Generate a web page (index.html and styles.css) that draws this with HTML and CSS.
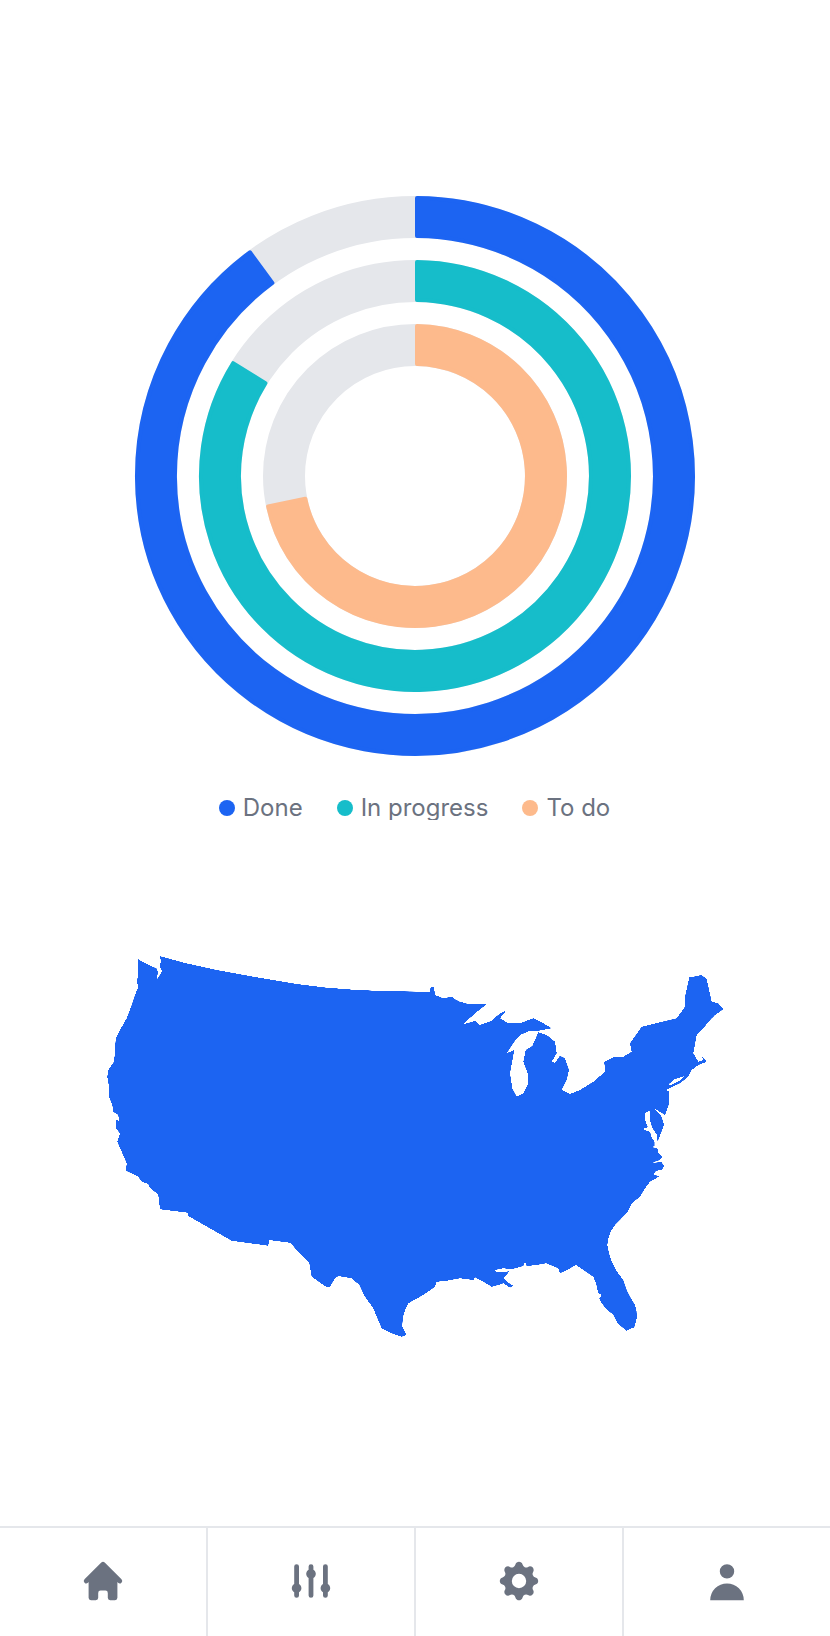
FILE: index.html
```html
<!DOCTYPE html>
<html lang="en">
<head>
<meta charset="utf-8">
<title>Dashboard</title>
<link rel="stylesheet" href="styles.css">
</head>
<body>
<div class="app">
  <main class="content">
    <section class="chart">
      <svg class="radial" viewBox="0 190 830 580" aria-hidden="true">
        <circle class="track" cx="415" cy="476" r="259"/>
        <circle class="track" cx="415" cy="476" r="195"/>
        <circle class="track" cx="415" cy="476" r="131"/>
        <path class="arc arc-done" d="M417 198A278 278 0 1 1 249.9 252.3L272.4 282.9A240 240 0 1 0 417 236Z"/>
        <path class="arc arc-progress" d="M417 262A214 214 0 1 1 233.1 363.2L265.4 383.2A176 176 0 1 0 417 300Z"/>
        <path class="arc arc-todo" d="M417 326A150 150 0 1 1 268.1 506.4L305.3 498.7A112 112 0 1 0 417 364Z"/>
      </svg>
      <ul class="legend">
        <li class="legend-item"><span class="dot dot-done"></span>Done</li>
        <li class="legend-item"><span class="dot dot-progress"></span>In progress</li>
        <li class="legend-item"><span class="dot dot-todo"></span>To do</li>
      </ul>
    </section>
    <section class="map">
      <svg class="usa" viewBox="0 930 830 420" aria-hidden="true">
        <defs>
          <filter id="smooth" x="-2%" y="-2%" width="104%" height="104%" color-interpolation-filters="sRGB">
            <feGaussianBlur stdDeviation="0.7"/>
            <feColorMatrix type="matrix" values="1 0 0 0 0  0 1 0 0 0  0 0 1 0 0  0 0 0 7 -3"/>
          </filter>
        </defs>
        <path class="usa-shape" fill-rule="evenodd" d="M137.7 959L146.7 964L156.7 968.5L158 972L156.5 980L160.5 974L162 971L159.7 966.5L161 961L159.5 956L185 963L216.7 970L255 977L296.7 984L325 987.5L356.7 990L390 991.3L430 991.7L430.7 986.7L434 987.3L435 995L443.3 998.3L451.7 996.7L455 999.3L460 1001.7L468.3 1004L486.7 1004.3L475 1013.3L463.3 1024.3L475 1021L480 1025L491.7 1020.7L500 1013.3L506 1010.7L500 1018.3L508.3 1023.3L520 1023.3L533.3 1018.3L543.3 1023.3L551.7 1028.3L538.3 1030.7L530 1030.7L520 1035L514.3 1041.7L506.7 1053.3L514.3 1050L510 1073.3L512.3 1088.3L516.7 1096.7L523.3 1093.3L527.7 1085L527.7 1073.3L523.3 1061.7L525.7 1050L532.3 1046L535 1040L538.3 1032.3L546.7 1035L555 1041.7L556.7 1053.3L551.7 1061.7L555 1062.7L560 1055.7L565 1058.3L569 1070L566.7 1080L561.7 1090L570 1094L580 1090L593.3 1081.7L605 1071.7L604.3 1061.7L613.3 1057.3L623.3 1056.7L631.7 1051.7L630 1043.3L641.7 1026.7L676.7 1018.3L685 1006.7L685 996.7L689.3 977.3L693.3 976.7L701.7 975L706.7 979.3L711.7 1001.7L718.3 1003.3L723.3 1009.3L715 1015L710 1020L703.3 1028.3L696.7 1035L693.3 1053.3L698.3 1061.7L703.3 1060L701.7 1056L706.7 1061.7L698.3 1065L691.7 1070L688.3 1076.7L680 1083.3L666 1090L669.3 1091.7L669.3 1103.3L665 1115L654 1108.3L661.7 1116.7L664 1125L658.3 1140L657.7 1142.7L657 1135L652 1127.3L650 1120L649.5 1110.5L645.5 1113L644.5 1118.3L647.8 1127.3L642.5 1129L650.2 1132L651.2 1136.7L654.5 1141.7L654.5 1146.2L650 1147.3L657.3 1147.8L658.3 1153.3L662.3 1156.7L660 1160L651.7 1162.7L661.7 1162.2L664 1166L661.7 1170L656 1170.7L653.3 1175L660 1176L650 1181.7L645 1188.3L640 1196.7L631.7 1203.3L626.7 1213.3L615 1225L611 1231L608.3 1238.3L607.3 1245L609 1253L611.7 1261.7L616.5 1271L623.3 1280L626.7 1290L630.5 1297.5L635 1305L636.5 1311L636.7 1318.3L634.3 1327.3L626 1330.7L621.7 1326.7L616.7 1321.7L613.3 1315L605.7 1308.3L601.7 1303.3L599.3 1298.3L601.7 1295L598.3 1293.3L596 1283.3L593.3 1276.7L583.3 1270L576 1265L568.3 1269.3L560 1273.3L558.3 1268.3L546 1263.3L536.7 1265L526.7 1266L525 1261.7L523.3 1266L511.7 1269.3L503.3 1268.3L495 1270L496.7 1272.3L505 1272.3L510 1270.7L503.3 1278.3L508.3 1282.7L513.3 1285.7L510 1287.7L503.3 1283.3L498.3 1285L491.7 1286.7L483.3 1281.7L475 1277.3L473.3 1280L460 1278.3L446.7 1280.7L436.7 1281.7L435 1286.7L423.3 1295L420 1296.7L408.3 1303.3L405 1310L402.7 1318.3L402.3 1326.7L406.7 1335L401.7 1336.7L391.7 1333.3L381.7 1328.3L376 1315L373.3 1308.3L365 1296.7L359.3 1285L351.7 1278.3L338.3 1276L335 1278.3L330 1286.7L326.7 1287.3L311.7 1276.7L309.3 1263.3L290 1242.7L269 1240L268.3 1245.7L231.7 1240.7L188.3 1216L188.3 1212.7L160 1209.3L158.3 1195L149.3 1186.7L148.3 1184L141.7 1181.7L138.3 1176.7L126 1170.7L126.7 1163.3L121.7 1151.7L117.3 1141.7L120 1133.3L115.7 1128.3L115.7 1120L119 1120.7L118.3 1115L113.3 1111.7L112.3 1105L109 1096.7L109.3 1088.3L107.3 1076.7L108.3 1070L114 1061.7L115 1051.7L115.7 1038.3L120 1030L126.7 1018.3L131 1007L135 995L138.3 986.7L136.7 981.7L138.3 975ZM668.3 1084.5L675 1079L685 1076L679 1081L670 1085.5Z"/>
      </svg>
    </section>
  </main>
  <nav class="tabbar">
    <a class="tab" href="#" aria-label="Home">
      <svg class="tab-icon" viewBox="0 0 20 20"><path d="M10.707 2.293a1 1 0 00-1.414 0l-7 7a1 1 0 001.414 1.414L4 10.414V17a1 1 0 001 1h2a1 1 0 001-1v-2a1 1 0 011-1h2a1 1 0 011 1v2a1 1 0 001 1h2a1 1 0 001-1v-6.586l.293.293a1 1 0 001.414-1.414l-7-7z"/></svg>
    </a>
    <a class="tab" href="#" aria-label="Filters">
      <svg class="tab-icon" viewBox="0 0 20 20"><path d="M5 4a1 1 0 00-2 0v7.268a2 2 0 000 3.464V16a1 1 0 102 0v-1.268a2 2 0 000-3.464V4zM11 4a1 1 0 10-2 0v1.268a2 2 0 000 3.464V16a1 1 0 102 0V8.732a2 2 0 000-3.464V4zM16 3a1 1 0 011 1v7.268a2 2 0 010 3.464V16a1 1 0 11-2 0v-1.268a2 2 0 010-3.464V4a1 1 0 011-1z"/></svg>
    </a>
    <a class="tab" href="#" aria-label="Settings">
      <svg class="tab-icon" viewBox="0 0 20 20"><path fill-rule="evenodd" d="M11.49 3.17c-.38-1.56-2.6-1.56-2.98 0a1.532 1.532 0 01-2.286.948c-1.372-.836-2.942.734-2.106 2.106.54.886.061 2.042-.947 2.287-1.561.379-1.561 2.6 0 2.978a1.532 1.532 0 01.947 2.287c-.836 1.372.734 2.942 2.106 2.106a1.532 1.532 0 012.287.947c.379 1.561 2.6 1.561 2.978 0a1.533 1.533 0 012.287-.947c1.372.836 2.942-.734 2.106-2.106a1.533 1.533 0 01.947-2.287c1.561-.379 1.561-2.6 0-2.978a1.532 1.532 0 01-.947-2.287c.836-1.372-.734-2.942-2.106-2.106a1.532 1.532 0 01-2.287-.947zM10 13a3 3 0 100-6 3 3 0 000 6z"/></svg>
    </a>
    <a class="tab" href="#" aria-label="Profile">
      <svg class="tab-icon" viewBox="0 0 20 20"><path d="M10 9a3 3 0 100-6 3 3 0 000 6zm-7 9a7 7 0 1114 0H3z"/></svg>
    </a>
  </nav>
</div>
</body>
</html>
```
FILE: styles.css
```css
* { box-sizing: border-box; }
html, body { margin: 0; padding: 0; background: #fff; }
body { font-family: Inter, "Liberation Sans", sans-serif; }

.app {
  display: flex;
  flex-direction: column;
  height: 1636px;
  overflow: hidden;
}

.content { flex: 1; min-height: 0; }

.chart { padding-top: 190px; }

.radial { display: block; width: 830px; height: 580px; }

.track { fill: none; stroke: #E5E7EB; stroke-width: 42; }

.arc { stroke-width: 4; stroke-linejoin: round; }
.arc-done { fill: #1C64F2; stroke: #1C64F2; }
.arc-progress { fill: #16BDCA; stroke: #16BDCA; }
.arc-todo { fill: #FDBA8C; stroke: #FDBA8C; }

.legend {
  list-style: none;
  margin: 21px 0 0;
  padding: 0 1px 0 0;
  height: 29px;
  overflow: hidden;
  display: flex;
  justify-content: center;
  gap: 34px;
}

.legend-item {
  display: flex;
  align-items: center;
  gap: 8px;
  height: 34px;
  font-size: 24px;
  line-height: 34px;
  color: #6B7280;
}

.dot { width: 16px; height: 16px; border-radius: 50%; }
.dot-done { background: #1C64F2; }
.dot-progress { background: #16BDCA; }
.dot-todo { background: #FDBA8C; }

.map { margin-top: 110px; }

.usa { display: block; width: 830px; height: 420px; }
.usa-shape { fill: #1C64F2; filter: url(#smooth); }

.tabbar {
  display: grid;
  grid-template-columns: repeat(4, 1fr);
  gap: 2px;
  height: 110px;
  padding-top: 2px;
  background: #E5E7EB;
}

.tab {
  display: flex;
  align-items: center;
  justify-content: center;
  padding-bottom: 2px;
  background: #fff;
}

.tab-icon { width: 48px; height: 48px; fill: #6B7280; }
```
